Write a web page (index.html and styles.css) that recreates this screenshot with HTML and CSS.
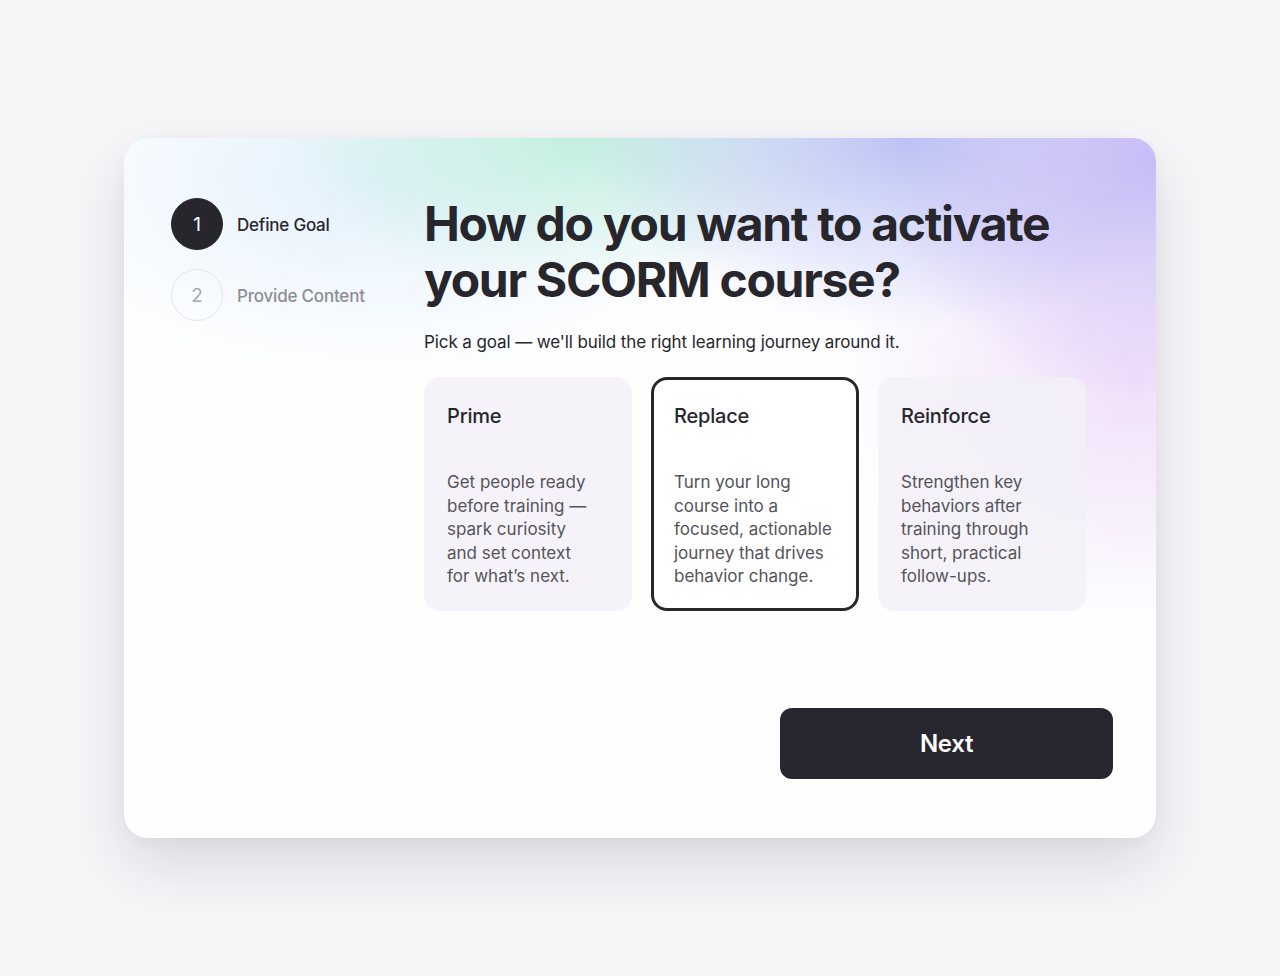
FILE: index.html
```html
<!DOCTYPE html>
<html lang="en">

<head>
    <meta charset="UTF-8">
    <title>Activate SCORM course</title>
    <link rel="stylesheet" href="styles.css">
</head>

<body>

    <div class="wizard">
        <div class="wizard_body">
            <!--left column: the steps-->
            <ul class="steps">
                <li class="step step_active">
                    <span class="step_num">1</span>
                    <span class="step_label">Define Goal</span>
                </li>
                <li class="step">
                    <span class="step_num">2</span>
                    <span class="step_label">Provide Content</span>
                </li>
            </ul>

            <div class="goal">
                <h1 class="goal_title">How do you want to activate your SCORM course?</h1>
                <p class="goal_sub">Pick a goal — we'll build the right learning journey around it.</p>

                <div class="options">
                    <div class="option">
                        <h3>Prime</h3>
                        <p>Get people ready before training — spark curiosity and set context for what’s next.</p>
                    </div>
                    <div class="option option_selected">
                        <h3>Replace</h3>
                        <p>Turn your long course into a focused, actionable journey that drives behavior change.</p>
                    </div>
                    <div class="option">
                        <h3>Reinforce</h3>
                        <p>Strengthen key behaviors after training through short, practical follow-ups.</p>
                    </div>
                </div>
            </div>
        </div>

        <div class="wizard_foot">
            <button class="btn_next">Next</button>
        </div>
    </div>

</body>

</html>
```

FILE: styles.css
```css
* {
    margin: 0px;
    padding: 0px;
    box-sizing: border-box;
}

html {
    background-color: #F6F5F8;
}

body {
    min-height: 100vh;
    font-family: Inter, "Noto Sans", sans-serif;
    color: #28262D;
    padding-top: 138px;
}

.wizard {
    width: 1032px;
    height: 700px;
    margin: 0 auto;
    border-radius: 24px;
    padding: 58px 43px 59px 47px;
    display: flex;
    flex-direction: column;
    background-color: #FEFEFF;
    /*soft colour wash along the top*/
    background-image:
        radial-gradient(ellipse 280px 240px at 1030px 20px, rgba(195, 182, 245, 0.9), rgba(195, 182, 245, 0) 100%),
        radial-gradient(ellipse 320px 190px at 780px 0px, rgba(175, 185, 242, 0.85), rgba(175, 185, 242, 0) 100%),
        radial-gradient(ellipse 300px 150px at 450px 0px, rgba(190, 238, 220, 0.9), rgba(190, 238, 220, 0) 100%),
        radial-gradient(ellipse 300px 250px at 1010px 240px, rgba(236, 212, 248, 0.75), rgba(236, 212, 248, 0) 100%),
        radial-gradient(ellipse 380px 200px at 250px 40px, rgba(225, 240, 252, 0.9), rgba(225, 240, 252, 0) 100%);
    box-shadow: 0 28px 60px rgba(40, 35, 60, 0.13), 0 4px 14px rgba(40, 35, 60, 0.04);
}

.wizard_body {
    display: flex;
}

.steps {
    list-style: none;
    width: 253px;
    margin-top: 2px;
    display: flex;
    flex-direction: column;
    gap: 19px;
}

.step {
    display: flex;
    align-items: center;
    gap: 14px;
}

.step_num {
    width: 52px;
    height: 52px;
    border-radius: 50%;
    border: 1px solid #E6E4E9;
    display: flex;
    align-items: center;
    justify-content: center;
    font-size: 19px;
    color: #A9A7AD;
}

.step_label {
    font-size: 17px;
    font-weight: 500;
    color: #8E8C93;
    letter-spacing: -0.2px;
    margin-top: 2px;
}

.step_active .step_num {
    background-color: #28262D;
    border-color: #28262D;
    color: white;
}

.step_active .step_label {
    color: #28262D;
}

.goal {
    width: 662px;
}

.goal_title {
    font-size: 48px;
    font-weight: 700;
    line-height: 56px;
    letter-spacing: -1.3px;
}

.goal_sub {
    font-size: 17px;
    margin-top: 24px;
    letter-spacing: -0.1px;
}

.options {
    display: grid;
    grid-template-columns: repeat(3, 1fr);
    gap: 19px;
    margin-top: 25px;
}

.option {
    height: 234px;
    border-radius: 16px;
    padding: 24px 20px 0 23px;
    background-color: rgba(242, 240, 247, 0.8);
    border: 3px solid transparent;
}

.option h3 {
    font-size: 20px;
    font-weight: 500;
    letter-spacing: -0.2px;
    margin-left: -3px;
}

.option p {
    font-size: 17px;
    line-height: 23.5px;
    color: #55535A;
    margin-top: 43px;
    margin-left: -3px;
    text-wrap: balance;
}

.option_selected {
    background-color: white;
    border-color: #28262D;
}

.wizard_foot {
    margin-top: auto;
    display: flex;
    justify-content: flex-end;
}

.btn_next {
    width: 333px;
    height: 71px;
    border: none;
    border-radius: 12px;
    background-color: #28262F;
    color: white;
    font-family: Inter, "Noto Sans", sans-serif;
    font-size: 24px;
    font-weight: 600;
    letter-spacing: -0.3px;
}
```
